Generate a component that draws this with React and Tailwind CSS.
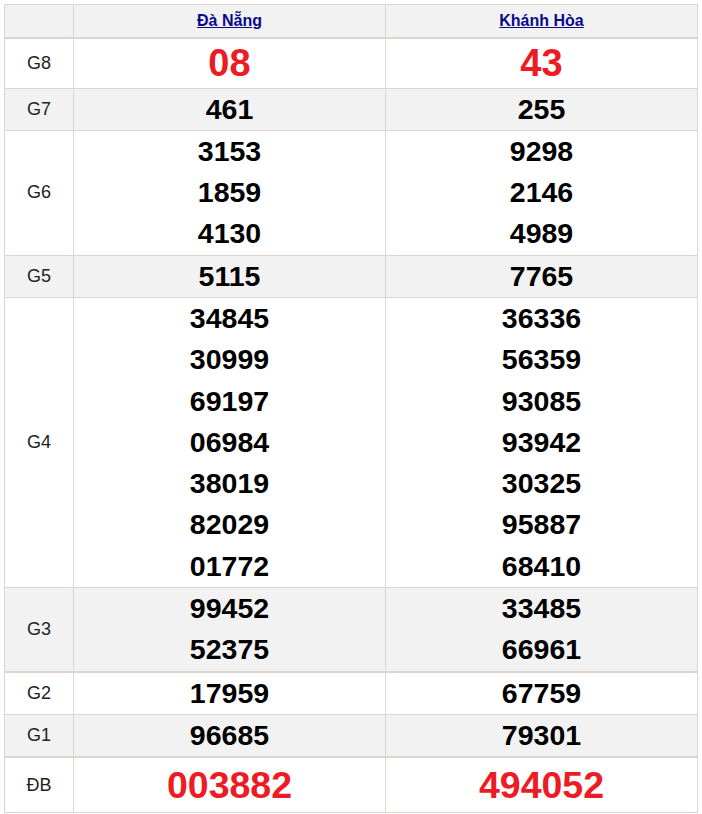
const ROWS = [
  { label: 'G8', a: ['08'], b: ['43'], red: true, big: 'text-[38px] leading-[49px]' },
  { label: 'G7', a: ['461'], b: ['255'] },
  { label: 'G6', a: ['3153', '1859', '4130'], b: ['9298', '2146', '4989'] },
  { label: 'G5', a: ['5115'], b: ['7765'] },
  {
    label: 'G4',
    a: ['34845', '30999', '69197', '06984', '38019', '82029', '01772'],
    b: ['36336', '56359', '93085', '93942', '30325', '95887', '68410'],
  },
  { label: 'G3', a: ['99452', '52375'], b: ['33485', '66961'], thick: true },
  { label: 'G2', a: ['17959'], b: ['67759'] },
  { label: 'G1', a: ['96685'], b: ['79301'], thick: true },
  { label: 'ĐB', a: ['003882'], b: ['494052'], red: true, big: 'text-[37.5px] leading-[54px]' },
]

const border = 'border border-[#ddd6cf]'

function Numbers({ list, row }) {
  return (
    <td className={`${border} ${row.thick ? 'border-b-2' : ''} text-center align-middle font-bold`}>
      {list.map(n => (
        <div
          key={n}
          className={`${row.big ?? 'text-[28.5px] leading-[41.3px]'} ${row.red ? 'text-[#ed1c24]' : 'text-black'}`}
        >
          {n}
        </div>
      ))}
    </td>
  )
}

export default function App() {
  return (
    <div className="bg-white pt-1 px-1 w-[702px]" style={{ fontFamily: '"Liberation Sans", Arial, sans-serif' }}>
      <table className="w-[693px] border-collapse table-fixed">
        <colgroup>
          <col className="w-[69px]" />
          <col className="w-[312px]" />
          <col className="w-[312px]" />
        </colgroup>
        <thead>
          <tr className="bg-[#f2f2f2] h-[33px]">
            <th className={`${border} border-b-2`}></th>
            <th className={`${border} border-b-2 text-center`}>
              <a href="#" className="text-[16px] font-bold text-[#0a0a8c] underline">Đà Nẵng</a>
            </th>
            <th className={`${border} border-b-2 text-center`}>
              <a href="#" className="text-[16px] font-bold text-[#0a0a8c] underline">Khánh Hòa</a>
            </th>
          </tr>
        </thead>
        <tbody>
          {ROWS.map((row, i) => (
            <tr key={row.label} className={i % 2 === 1 ? 'bg-[#f2f2f2]' : 'bg-white'}>
              <td className={`${border} ${row.thick ? 'border-b-2' : ''} text-center align-middle text-[18px] text-[#222]`}>
                {row.label}
              </td>
              <Numbers list={row.a} row={row} />
              <Numbers list={row.b} row={row} />
            </tr>
          ))}
        </tbody>
      </table>
      <div className="border-t-2 border-[#f0a04b] mt-px" />
    </div>
  )
}
